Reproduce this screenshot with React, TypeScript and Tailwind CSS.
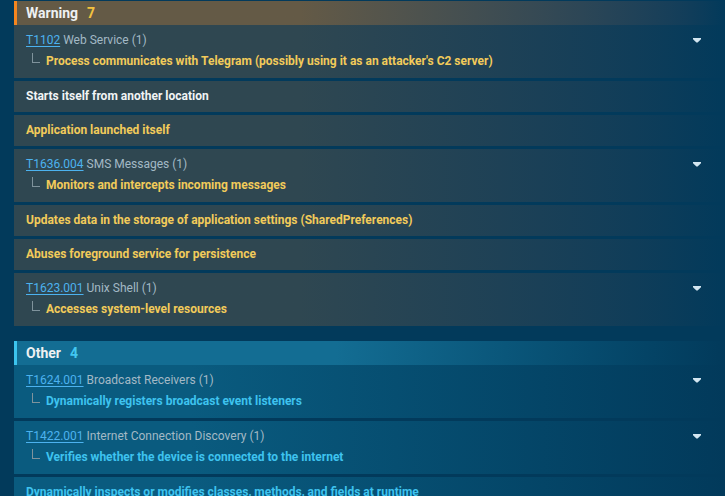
import React from 'react';

/* ------------------------------------------------------------------
 * data
 * ---------------------------------------------------------------- */
type Row =
  | { kind: 'tech'; id: string; name: string; sub: string }
  | { kind: 'plain'; text: string; white?: boolean };

interface Group {
  title: string;
  count: number;
  tone: 'warning' | 'other';
  rows: Row[];
}

const groups: Group[] = [
  {
    title: 'Warning',
    count: 7,
    tone: 'warning',
    rows: [
      {
        kind: 'tech',
        id: 'T1102',
        name: 'Web Service (1)',
        sub: "Process communicates with Telegram (possibly using it as an attacker's C2 server)",
      },
      { kind: 'plain', text: 'Starts itself from another location', white: true },
      { kind: 'plain', text: 'Application launched itself' },
      {
        kind: 'tech',
        id: 'T1636.004',
        name: 'SMS Messages (1)',
        sub: 'Monitors and intercepts incoming messages',
      },
      { kind: 'plain', text: 'Updates data in the storage of application settings (SharedPreferences)' },
      { kind: 'plain', text: 'Abuses foreground service for persistence' },
      { kind: 'tech', id: 'T1623.001', name: 'Unix Shell (1)', sub: 'Accesses system-level resources' },
    ],
  },
  {
    title: 'Other',
    count: 4,
    tone: 'other',
    rows: [
      {
        kind: 'tech',
        id: 'T1624.001',
        name: 'Broadcast Receivers (1)',
        sub: 'Dynamically registers broadcast event listeners',
      },
      {
        kind: 'tech',
        id: 'T1422.001',
        name: 'Internet Connection Discovery (1)',
        sub: 'Verifies whether the device is connected to the internet',
      },
      { kind: 'plain', text: 'Dynamically inspects or modifies classes, methods, and fields at runtime' },
    ],
  },
];

/* ------------------------------------------------------------------
 * pieces
 * ---------------------------------------------------------------- */
const Caret = () => (
  <svg width="8" height="5" viewBox="0 0 8 5" className="shrink-0">
    <path d="M0 0h8v1.3L4.6 4.6h-1.2L0 1.3z" fill="#d3e6f1" />
  </svg>
);

const ItemRow: React.FC<{ row: Row; tone: Group['tone'] }> = ({ row, tone }) => {
  const bg =
    tone === 'warning'
      ? 'bg-linear-to-r from-[#2f4751] from-40% to-[#023a5b]'
      : 'bg-linear-to-r from-[#0a5b7f] from-25% to-[#023a5b]';
  const accent = tone === 'warning' ? 'text-[#f2cb5a]' : 'text-[#3ec3ef]';

  if (row.kind === 'plain') {
    return (
      <div className={`${bg} pl-3 pr-6 pt-[7px] pb-[7px]`}>
        <p className={`text-[12px] leading-[17px] font-bold ${row.white ? 'text-[#f1f4f5]' : accent}`}>
          {row.text}
        </p>
      </div>
    );
  }

  return (
    <div className={`${bg} pl-3 pr-6 pt-[7px] pb-[8px]`}>
      <div className="flex items-center justify-between h-[17px]">
        <p className="text-[12px] leading-[17px]">
          <span className="text-[#4cb2ef] underline underline-offset-2">{row.id}</span>{' '}
          <span className="text-[#a3b9c5]">{row.name}</span>
        </p>
        <Caret />
      </div>
      <div className="flex items-center mt-[3px] h-[18px]">
        <span className="ml-[6px] mr-[6px] -mt-[6px] w-[8px] h-[10px] border-l border-b border-[#7f939c]" />
        <p className={`text-[12px] leading-[18px] font-bold ${accent}`}>{row.sub}</p>
      </div>
    </div>
  );
};

const GroupBlock: React.FC<{ group: Group }> = ({ group }) => {
  const warning = group.tone === 'warning';
  return (
    <section className="flex flex-col">
      <header
        className={`h-[24px] flex items-center pl-[9px] border-l-[3px] ${
          warning
            ? 'border-[#f5861f] bg-linear-to-r from-[#645a46] from-40% to-[#023a5b]'
            : 'border-[#3cc4ee] bg-linear-to-r from-[#136d93] from-45% to-[#023a5b]'
        }`}
      >
        <span className="text-[14px] font-bold text-[#eef1f2]">{group.title}</span>
        <span className={`ml-[9px] text-[14px] font-bold ${warning ? 'text-[#f3c23f]' : 'text-[#42c7f1]'}`}>
          {group.count}
        </span>
      </header>
      <div className="flex flex-col gap-[3px]">
        {group.rows.map((row, i) => (
          <ItemRow key={i} row={row} tone={group.tone} />
        ))}
      </div>
    </section>
  );
};

/* ------------------------------------------------------------------
 * page
 * ---------------------------------------------------------------- */
export default function App() {
  return (
    <div className="min-h-screen bg-[#023a5b] font-[Roboto,'Liberation_Sans',sans-serif] pl-[14px] pt-[1px]">
      <div className="flex flex-col gap-[15px]">
        {groups.map((g) => (
          <GroupBlock key={g.title} group={g} />
        ))}
      </div>
    </div>
  );
}
